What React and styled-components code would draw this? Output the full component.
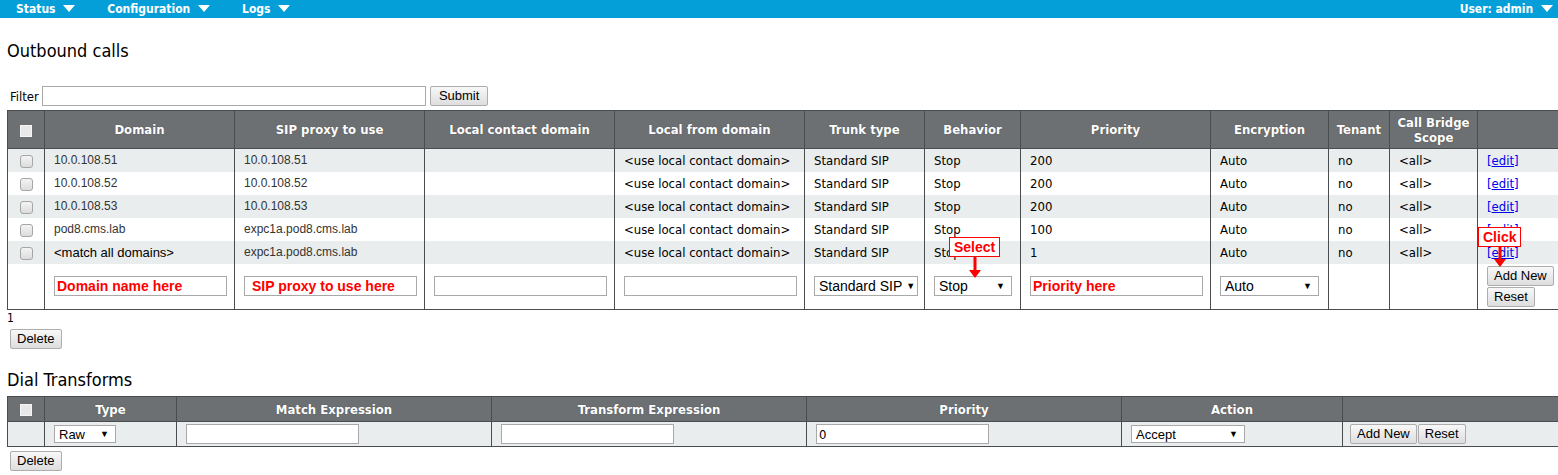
import React from 'react';
import styled, { createGlobalStyle } from 'styled-components';

const GlobalStyle = createGlobalStyle`
    html, body {
        margin: 0;
        padding: 0;
        overflow: hidden;
        background: #fff;
    }
    body {
        font-family: "DejaVu Sans Condensed", "DejaVu Sans", sans-serif;
        font-size: 13px;
        color: #000;
    }
`;

const TAHOMA = '"DejaVu Sans Condensed", "DejaVu Sans", sans-serif';
const ARIAL = '"Liberation Sans", Arial, sans-serif';

const outbound = [
    { domain: '10.0.108.51', proxy: '10.0.108.51', priority: '200' },
    { domain: '10.0.108.52', proxy: '10.0.108.52', priority: '200' },
    { domain: '10.0.108.53', proxy: '10.0.108.53', priority: '200' },
    { domain: 'pod8.cms.lab', proxy: 'expc1a.pod8.cms.lab', priority: '100' },
    { domain: '<match all domains>', proxy: 'expc1a.pod8.cms.lab', priority: '1', big: true },
];

const Caret = ({ size = 12 }) => (
    <svg width={size} height={size * 0.6} viewBox="0 0 12 7">
        <polygon points="0,0 12,0 6,7" fill="#fff" />
    </svg>
);

const Arrow = ({ h }) => (
    <svg width="12" height={h} viewBox={`0 0 12 ${h}`}>
        <rect x="4.5" y="0" width="3" height={h - 6} fill="#ff0000" />
        <polygon points={`0,${h - 8} 12,${h - 8} 6,${h}`} fill="#ff0000" />
    </svg>
);

const App = () => {
    return (
        <>
            <GlobalStyle />
            <NavBar>
                <NavGroup>
                    <NavItem>Status <Caret /></NavItem>
                    <NavItem>Configuration <Caret /></NavItem>
                    <NavItem>Logs <Caret /></NavItem>
                </NavGroup>
                <NavItem>User: admin <Caret /></NavItem>
            </NavBar>

            <Page>
                <Title>Outbound calls</Title>

                <FilterRow>
                    <FilterLabel>Filter</FilterLabel>
                    <TextInput $w={384} />
                    <Button $wide>Submit</Button>
                </FilterRow>

                <TableWrap>
                    <Table>
                        <colgroup>
                            {[37, 190, 190, 190, 190, 120, 96, 190, 118, 61, 88, 83].map((w, i) => (
                                <col key={i} style={{ width: w }} />
                            ))}
                        </colgroup>
                        <thead>
                            <HeadRow $h={38}>
                                <Th><HeadCheck /></Th>
                                <Th>Domain</Th>
                                <Th>SIP proxy to use</Th>
                                <Th>Local contact domain</Th>
                                <Th>Local from domain</Th>
                                <Th>Trunk type</Th>
                                <Th>Behavior</Th>
                                <Th>Priority</Th>
                                <Th>Encryption</Th>
                                <Th>Tenant</Th>
                                <Th>Call Bridge<br />Scope</Th>
                                <Th></Th>
                            </HeadRow>
                        </thead>
                        <tbody>
                            {outbound.map((r, i) => (
                                <Row key={i} $alt={i % 2 === 0}>
                                    <Td $center><Check /></Td>
                                    <Td $arial $big={r.big}>{r.domain}</Td>
                                    <Td $arial>{r.proxy}</Td>
                                    <Td></Td>
                                    <Td>&lt;use local contact domain&gt;</Td>
                                    <Td>Standard SIP</Td>
                                    <Td>Stop</Td>
                                    <Td>{r.priority}</Td>
                                    <Td>Auto</Td>
                                    <Td>no</Td>
                                    <Td>&lt;all&gt;</Td>
                                    <Td><EditLink>[<u>edit</u>]</EditLink></Td>
                                </Row>
                            ))}
                            <Row $h={46}>
                                <Td></Td>
                                <Td><TextInput $w={173} $hint>Domain name here</TextInput></Td>
                                <Td><TextInput $w={173} $hint $indent>SIP proxy to use here</TextInput></Td>
                                <Td><TextInput $w={173} /></Td>
                                <Td><TextInput $w={173} /></Td>
                                <Td><Select $w={104}>Standard SIP</Select></Td>
                                <Td><Select $w={78}>Stop</Select></Td>
                                <Td><TextInput $w={173} $hint>Priority here</TextInput></Td>
                                <Td><Select $w={99}>Auto</Select></Td>
                                <Td></Td>
                                <Td></Td>
                                <Td>
                                    <ButtonStack>
                                        <Button>Add New</Button>
                                        <Button>Reset</Button>
                                    </ButtonStack>
                                </Td>
                            </Row>
                        </tbody>
                    </Table>
                    <Callout $left={942} $top={127}>
                        <CalloutLabel>Select</CalloutLabel>
                        <Arrow h={21} />
                    </Callout>
                    <Callout $left={1471} $top={117}>
                        <CalloutLabel>Click</CalloutLabel>
                        <Arrow h={20} />
                    </Callout>
                </TableWrap>

                <PageCount>1</PageCount>
                <Button $mt={4}>Delete</Button>

                <SubTitle>Dial Transforms</SubTitle>

                <Table>
                    <colgroup>
                        {[37, 132, 315, 315, 315, 221, 218].map((w, i) => (
                            <col key={i} style={{ width: w }} />
                        ))}
                    </colgroup>
                    <thead>
                        <HeadRow $h={25}>
                            <Th><HeadCheck /></Th>
                            <Th>Type</Th>
                            <Th>Match Expression</Th>
                            <Th>Transform Expression</Th>
                            <Th>Priority</Th>
                            <Th>Action</Th>
                            <Th></Th>
                        </HeadRow>
                    </thead>
                    <tbody>
                        <Row $alt $h={25}>
                            <Td></Td>
                            <Td><Select $w={62} $small>Raw</Select></Td>
                            <Td><TextInput $w={173} /></Td>
                            <Td><TextInput $w={173} /></Td>
                            <Td><TextInput $w={173}>0</TextInput></Td>
                            <Td><Select $w={114} $small>Accept</Select></Td>
                            <Td $pl={7}>
                                <ButtonLine>
                                    <Button>Add New</Button>
                                    <Button>Reset</Button>
                                </ButtonLine>
                            </Td>
                        </Row>
                    </tbody>
                </Table>
                <Button $mt={4}>Delete</Button>
            </Page>
        </>
    );
};

const NavBar = styled.div`
    height: 18px;
    background: #049fd9;
    display: flex;
    align-items: center;
    justify-content: space-between;
    padding: 0 5px 0 16px;
`;

const NavGroup = styled.div`
    display: flex;
    gap: 32px;
`;

const NavItem = styled.div`
    display: flex;
    align-items: center;
    gap: 4px;
    color: #fff;
    font-family: ${TAHOMA};
    font-weight: bold;
    font-size: 12px;
    white-space: pre;
`;

const Page = styled.div`
    padding-left: 7px;
`;

const Title = styled.div`
    font-family: ${TAHOMA};
    font-size: 18px;
    line-height: 22px;
    margin-top: 22px;
    height: 22px;
`;

const SubTitle = styled(Title)`
    margin-top: 20px;
    height: 27px;
`;

const FilterRow = styled.div`
    display: flex;
    align-items: center;
    gap: 4px;
    margin-top: 24px;
    padding-left: 3px;
    height: 20px;
`;

const FilterLabel = styled.span`
    font-family: ${TAHOMA};
    font-size: 13px;
    margin-right: -1px;
`;

const TableWrap = styled.div`
    position: relative;
    margin-top: 4px;
`;

const Table = styled.table`
    table-layout: fixed;
    border-collapse: collapse;
    width: 1553px;
`;

const HeadRow = styled.tr`
    height: ${(p) => p.$h}px;
`;

const Th = styled.th`
    background: #6d7073;
    color: #fff;
    font-family: ${TAHOMA};
    font-size: 13px;
    font-weight: bold;
    line-height: 15px;
    padding: 0 4px;
    border: 1px solid #4a4d50;
    text-shadow: 0 0 1px #444;
    text-align: center;
    vertical-align: middle;
`;

const Row = styled.tr`
    background: ${(p) => (p.$alt ? '#e9eded' : '#fff')};
    height: ${(p) => p.$h || 23}px;
`;

const Td = styled.td`
    border-left: 1px solid #4a4d50;
    border-right: 1px solid #4a4d50;
    padding: 0 0 0 ${(p) => (p.$center ? 0 : p.$pl || 9)}px;
    text-align: ${(p) => (p.$center ? 'center' : 'left')};
    vertical-align: middle;
    font-family: ${(p) => (p.$arial ? ARIAL : TAHOMA)};
    font-size: ${(p) => (p.$arial && !p.$big ? 12 : 13)}px;
    color: ${(p) => (p.$arial && !p.$big ? '#333' : '#000')};
    white-space: nowrap;
    overflow: visible;

    tbody tr:last-child > & {
        border-bottom: 1px solid #4a4d50;
    }
`;

const Check = styled.span`
    display: inline-block;
    width: 11px;
    height: 11px;
    border: 1px solid #a6a6a6;
    border-radius: 3px;
    background: linear-gradient(#f4f4f4, #dcdcdc);
    vertical-align: middle;
`;

const HeadCheck = styled.span`
    display: inline-block;
    width: 10px;
    height: 10px;
    background: #e8e8e8;
    border: 1px solid #f5f5f5;
    vertical-align: middle;
`;

const EditLink = styled.span`
    color: #0000ee;
    font-family: ${TAHOMA};
    font-size: 13px;
`;

const TextInput = styled.div`
    box-sizing: border-box;
    width: ${(p) => p.$w}px;
    height: 20px;
    border: 1px solid #a9a9a9;
    background: #fff;
    display: flex;
    align-items: center;
    padding-left: ${(p) => (p.$indent ? 7 : 2)}px;
    font-family: ${(p) => (p.$hint ? ARIAL : TAHOMA)};
    font-weight: ${(p) => (p.$hint ? 'bold' : 'normal')};
    font-size: ${(p) => (p.$hint ? 14 : 13)}px;
    color: ${(p) => (p.$hint ? '#ff0000' : '#000')};
`;

const Select = styled.div`
    box-sizing: border-box;
    width: ${(p) => p.$w}px;
    height: ${(p) => (p.$small ? 18 : 20)}px;
    border: 1px solid #a9a9a9;
    background: #fff;
    display: flex;
    align-items: center;
    justify-content: space-between;
    padding: 0 6px 0 4px;
    font-family: ${ARIAL};
    font-size: ${(p) => (p.$small ? 13 : 14)}px;

    &::after {
        content: '▼';
        font-size: 9px;
        margin-left: 4px;
    }
`;

const Button = styled.button`
    font-family: ${ARIAL};
    font-size: 13px;
    color: #000;
    height: 20px;
    padding: 0 ${(p) => (p.$wide ? 8 : 6)}px;
    margin-top: ${(p) => p.$mt || 0}px;
    margin-left: ${(p) => (p.$mt ? 3 : 0)}px;
    border: 1px solid #adadad;
    border-radius: 2px;
    background: linear-gradient(#f8f8f8, #dddddd);
    line-height: 18px;
    display: inline-block;
    width: fit-content;
`;

const ButtonStack = styled.div`
    display: flex;
    flex-direction: column;
    align-items: flex-start;
    gap: 1px;
`;

const ButtonLine = styled.div`
    display: flex;
    gap: 1px;
`;

const PageCount = styled.div`
    font-family: ${TAHOMA};
    font-size: 12px;
    line-height: 14px;
    margin-top: 1px;
    color: #000;
`;

const Callout = styled.div`
    position: absolute;
    left: ${(p) => p.$left}px;
    top: ${(p) => p.$top}px;
    display: flex;
    flex-direction: column;
    align-items: center;
`;

const CalloutLabel = styled.div`
    box-sizing: border-box;
    height: 20px;
    padding: 0 4px;
    border: 1px solid #ff0000;
    background: #fff;
    color: #ff0000;
    font-family: ${ARIAL};
    font-weight: bold;
    font-size: 14px;
    line-height: 18px;
`;

export default App;
